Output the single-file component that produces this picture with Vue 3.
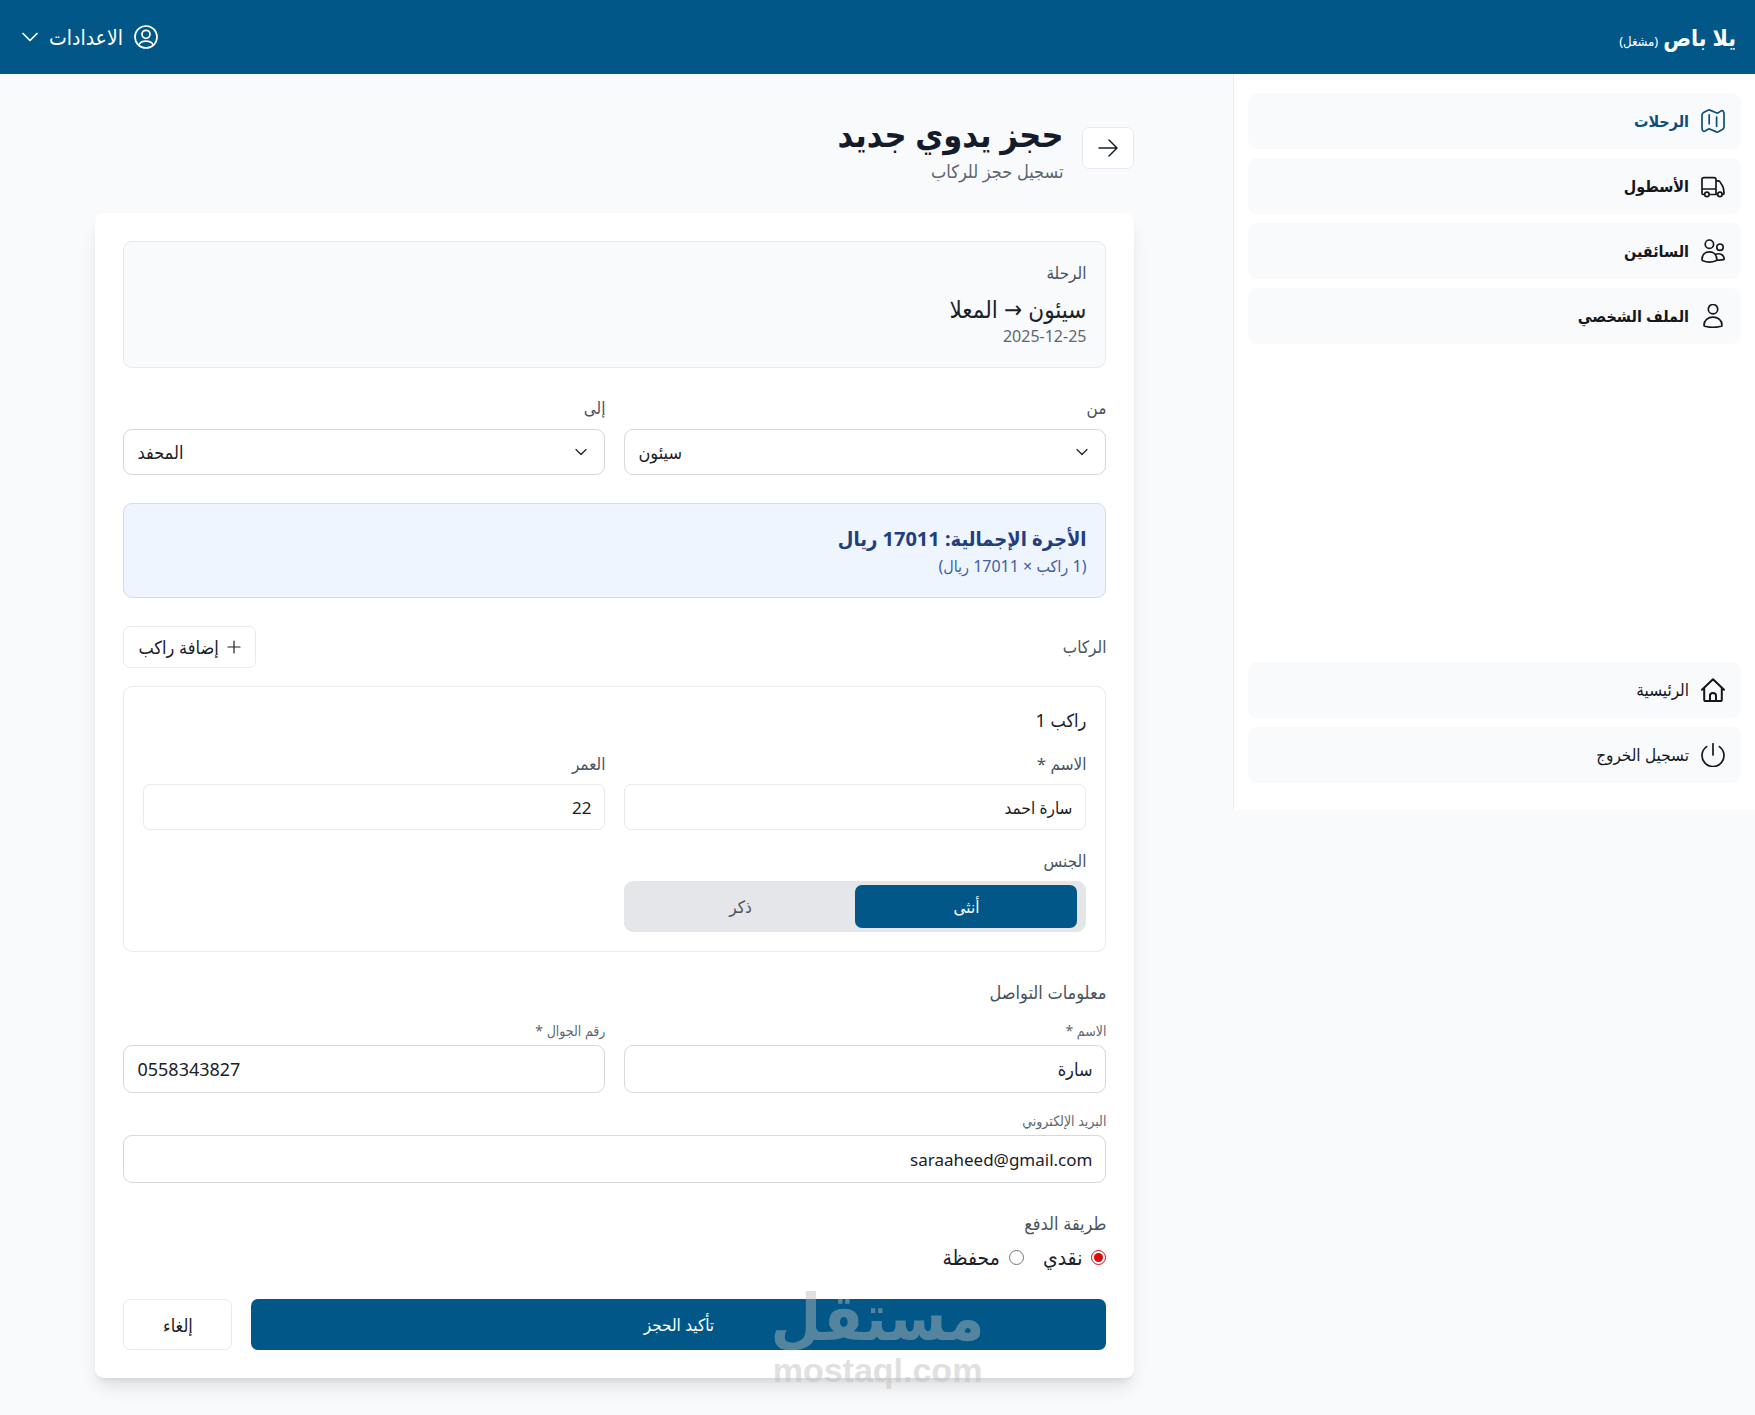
<script setup>
import { ref } from 'vue'

const from = ref('سيئون')
const to = ref('المحفد')
const passengerName = ref('سارة احمد')
const age = ref(22)
const gender = ref('female')
const contactName = ref('سارة')
const phone = ref('0558343827')
const email = ref('saraaheed@gmail.com')
const payment = ref('cash')

const mainLinks = [
  { label: 'الرحلات', icon: 'map', active: true },
  { label: 'الأسطول', icon: 'truck' },
  { label: 'السائقين', icon: 'users' },
  { label: 'الملف الشخصي', icon: 'user' },
]
const footLinks = [
  { label: 'الرئيسية', icon: 'home' },
  { label: 'تسجيل الخروج', icon: 'power' },
]

const icons = {
  map: 'M1 6V18.600C1 21.500 2 23 4.200 21.900L7 20.300Q8 19.700 9.100 20.200L15.400 22.900Q16.400 23.300 17.400 22.800L21.400 20.600Q23 19.700 23 17.800V5.400C23 2.500 22 1 19.800 2.100L17.200 3.700Q16.200 4.300 15.200 3.800L8.900 1.100Q7.900 .7 6.900 1.200L2.600 3.500Q1 4.400 1 6ZM8.200 5.800V14.800M15.600 8V17.200',
  truck: 'M3.600 20.500H2.600Q1 20.500 1 18.900V5.600Q1 3.600 3 3.600H13Q15 3.600 15 5.600V20.500H8.300M1 15H15M15 6.800H17Q18.300 6.800 19 7.900L21.200 11.400Q22.200 13 22.500 14.800L23 18.900Q23.200 20.500 21.500 20.500M16.600 20.500H15M3.700 20.400a2.200 2.200 0 1 0 4.400 0a2.200 2.200 0 1 0-4.400 0M16.700 20.400a2.200 2.200 0 1 0 4.400 0a2.200 2.200 0 1 0-4.400 0',
  users: 'M4.200 5.200a4.200 4.200 0 1 0 8.400 0a4.200 4.200 0 1 0-8.400 0M15.800 8.200a3.200 3.200 0 1 0 6.400 0a3.200 3.200 0 1 0-6.400 0M1 20.600C1 15.900 4 12.800 8.400 12.800S15.800 15.900 15.800 20.600Q15.800 21.500 15 21.800Q8.400 24.400 1.800 21.800Q1 21.500 1 20.600ZM14.600 15.600C18 13.600 22.800 15.400 23.200 19.600Q23.200 20.500 22.300 20.700Q19 21.500 15.800 20.900',
  user: 'M7.300 5.200a4.700 4.700 0 1 0 9.400 0a4.700 4.700 0 1 0-9.400 0M3 21.200C3 16.600 6.800 13.200 12 13.200S21 16.600 21 21.200Q21 22 20.200 22.300Q12 24.400 3.800 22.300Q3 22 3 21.200Z',
  home: 'M1 11.800L12 1.200L23 11.800M3.200 10V21.400Q3.200 23 4.800 23H19.200Q20.800 23 20.800 21.400V10M9 23V17.600Q9 15 12 15T15 17.600V23',
  power: 'M5.600 3.600A11 11 0 1 0 18.400 3.600M12 .8V12',
}
</script>

<template>
  <div class="page" dir="rtl" lang="ar">
    <header class="topbar">
      <div class="brand">
        <span class="brand-name">يلا باص</span>
        <small class="brand-role">(مشغل)</small>
      </div>
      <button type="button" class="settings">
        <svg class="ic" viewBox="0 0 24 24" aria-hidden="true">
          <circle cx="12" cy="12" r="11" />
          <circle cx="12" cy="9.300" r="4" />
          <path d="M4.800 20C6.200 17 8.800 16.200 12 16.200S17.800 17 19.200 20" />
        </svg>
        <span>الاعدادات</span>
        <svg class="ic caret" viewBox="0 0 16 16" aria-hidden="true"><path d="M1 4.500L8 11.500L15 4.500" /></svg>
      </button>
    </header>

    <div class="body">
      <aside class="sidebar">
        <nav class="links">
          <a
            v-for="link in mainLinks"
            :key="link.label"
            href="#"
            class="link strong"
            :class="{ active: link.active }"
          >
            <svg class="ic" viewBox="0 0 24 24" aria-hidden="true"><path :d="icons[link.icon]" /></svg>
            <span>{{ link.label }}</span>
          </a>
        </nav>
        <nav class="links">
          <a v-for="link in footLinks" :key="link.label" href="#" class="link">
            <svg class="ic" :class="link.icon" viewBox="0 0 24 24" aria-hidden="true"><path :d="icons[link.icon]" /></svg>
            <span>{{ link.label }}</span>
          </a>
        </nav>
      </aside>

      <main class="main">
        <div class="content">
          <div class="heading">
            <button type="button" class="btn back" aria-label="رجوع">
              <svg class="ic" viewBox="0 0 20 20" aria-hidden="true"><path d="M1 10H19M11 2L19 10L11 18" /></svg>
            </button>
            <div>
              <h1>حجز يدوي جديد</h1>
              <p class="subtitle">تسجيل حجز للركاب</p>
            </div>
          </div>

          <form class="card" @submit.prevent>
            <section class="trip">
              <p class="label">الرحلة</p>
              <p class="route">سيئون → المعلا</p>
              <p class="date">2025-12-25</p>
            </section>

            <div class="columns">
              <div class="field">
                <label class="label" for="from">من</label>
                <div class="select">
                  <select id="from" v-model="from" dir="ltr">
                    <option>سيئون</option>
                  </select>
                  <svg class="ic" viewBox="0 0 12 12" aria-hidden="true"><path d="M1 3.500L6 8.500L11 3.500" /></svg>
                </div>
              </div>
              <div class="field">
                <label class="label" for="to">إلى</label>
                <div class="select">
                  <select id="to" v-model="to" dir="ltr">
                    <option>المحفد</option>
                  </select>
                  <svg class="ic" viewBox="0 0 12 12" aria-hidden="true"><path d="M1 3.500L6 8.500L11 3.500" /></svg>
                </div>
              </div>
            </div>

            <section class="fare">
              <p class="fare-total">الأجرة الإجمالية: 17011 ريال</p>
              <p class="fare-detail">(1 راكب × 17011 ريال)</p>
            </section>

            <section class="passengers">
              <div class="row">
                <h2 class="label">الركاب</h2>
                <button type="button" class="btn add">
                  <svg class="ic" viewBox="0 0 14 14" aria-hidden="true"><path d="M7 1V13M1 7H13" /></svg>
                  <span>إضافة راكب</span>
                </button>
              </div>

              <div class="passenger">
                <h3>راكب 1</h3>
                <div class="columns">
                  <div class="field">
                    <label class="label" for="passenger-name">الاسم *</label>
                    <input id="passenger-name" v-model="passengerName" class="input compact" type="text" />
                  </div>
                  <div class="field">
                    <label class="label" for="passenger-age">العمر</label>
                    <input id="passenger-age" v-model="age" class="input compact" type="number" />
                  </div>
                  <div class="field">
                    <span id="gender-label" class="label">الجنس</span>
                    <div class="segment" role="group" aria-labelledby="gender-label">
                      <button type="button" :class="{ on: gender === 'female' }" @click="gender = 'female'">أنثى</button>
                      <button type="button" :class="{ on: gender === 'male' }" @click="gender = 'male'">ذكر</button>
                    </div>
                  </div>
                </div>
              </div>
            </section>

            <section class="contact">
              <h2 class="label section">معلومات التواصل</h2>
              <div class="columns">
                <div class="field tight">
                  <label class="label small" for="contact-name">الاسم *</label>
                  <input id="contact-name" v-model="contactName" class="input" type="text" />
                </div>
                <div class="field tight">
                  <label class="label small" for="contact-phone">رقم الجوال *</label>
                  <input id="contact-phone" v-model="phone" class="input" type="tel" dir="ltr" />
                </div>
                <div class="field tight wide">
                  <label class="label small" for="contact-email">البريد الإلكتروني</label>
                  <input id="contact-email" v-model="email" class="input" type="email" />
                </div>
              </div>
            </section>

            <fieldset class="payment">
              <legend class="label section">طريقة الدفع</legend>
              <div class="options">
                <label class="option">
                  <input v-model="payment" type="radio" name="payment" value="cash" />
                  <span>نقدي</span>
                </label>
                <label class="option">
                  <input v-model="payment" type="radio" name="payment" value="wallet" />
                  <span>محفظة</span>
                </label>
              </div>
            </fieldset>

            <div class="actions">
              <button type="submit" class="confirm">تأكيد الحجز</button>
              <button type="button" class="btn cancel">إلغاء</button>
            </div>
          </form>
        </div>
      </main>
    </div>

    <div class="watermark" aria-hidden="true">
      <span class="mark-ar">مستقل</span>
      <span class="mark-en">mostaql.com</span>
    </div>
  </div>
</template>

<style>
body {
  margin: 0;
  background: #f9fafc;
}
</style>

<style scoped>
.page,
.page * {
  box-sizing: border-box;
}
.page {
  --brand: #005788;
  --ink: #1b2129;
  --muted: #4b5360;
  --line: #e8eaed;
  --line-strong: #d5d8dc;
  position: relative;
  min-height: 100vh;
  background: #f9fafc;
  color: var(--ink);
  font-family: "Noto Sans", "DejaVu Sans Condensed", "DejaVu Sans", sans-serif;
  font-size: 17px;
  line-height: 24px;
}
.page button,
.page input,
.page select {
  margin: 0;
  font-family: inherit;
  color: inherit;
}
.page button {
  cursor: pointer;
}
h1,
h2,
h3,
p {
  margin: 0;
  font-weight: 400;
}
.ic {
  display: block;
  flex: none;
  width: 24px;
  height: 24px;
  fill: none;
  stroke: currentColor;
  stroke-width: 1.7;
  stroke-linecap: round;
  stroke-linejoin: round;
}

/* Top bar */
.topbar {
  display: flex;
  align-items: center;
  justify-content: space-between;
  height: 74px;
  padding: 0 19px 0 22px;
  background: var(--brand);
  color: #fff;
}
.brand {
  display: flex;
  align-items: baseline;
  gap: 5px;
}
.brand-name {
  font-size: 23px;
  font-weight: 700;
  line-height: 32px;
}
.brand-role {
  font-size: 13px;
}
.settings {
  display: flex;
  align-items: center;
  gap: 11px;
  padding: 0;
  border: 0;
  background: none;
  font-size: 21px;
  line-height: 28px;
}
.settings .caret {
  width: 16px;
  height: 16px;
}

/* Sidebar */
.body {
  display: flex;
  align-items: flex-start;
}
.sidebar {
  display: flex;
  flex: none;
  flex-direction: column;
  justify-content: space-between;
  width: 29.75%;
  min-height: 52vh;
  padding: 19px 14px 27px;
  border-inline-end: 1px solid #eceef1;
  background: #fff;
}
.links {
  display: flex;
  flex-direction: column;
  gap: 9px;
}
.link {
  display: flex;
  align-items: center;
  gap: 12px;
  height: 56px;
  padding: 0 16px;
  border-radius: 9px;
  background: #f9fafc;
  color: #14181d;
  text-decoration: none;
}
.link.strong {
  font-size: 16px;
  font-weight: 700;
}
.link.active {
  color: #0c4f78;
}
.ic.home {
  stroke-width: 2;
}

/* Main column */
.main {
  flex: 1;
  min-width: 0;
  padding: 37px 3px 37px 0;
}
.content {
  max-width: 1039px;
  margin: 0 auto;
}
.heading {
  display: flex;
  align-items: center;
  gap: 19px;
  margin-bottom: 28px;
}
.btn {
  display: flex;
  align-items: center;
  justify-content: center;
  border: 1px solid var(--line);
  border-radius: 7px;
  background: #fff;
}
.back {
  width: 52px;
  height: 42px;
  padding: 0;
}
.back .ic {
  width: 20px;
  height: 20px;
  stroke-width: 1.5;
}
h1 {
  font-size: 34px;
  font-weight: 700;
  line-height: 46px;
  color: #141b2b;
}
.subtitle {
  font-size: 18px;
  line-height: 28px;
  color: #5c6470;
}
.card {
  display: flex;
  flex-direction: column;
  gap: 28px;
  padding: 28px;
  border-radius: 9px;
  background: #fff;
  box-shadow: 0 12px 18px -3px rgba(0, 0, 0, 0.1), 0 5px 7px -4px rgba(0, 0, 0, 0.1);
}
.label {
  font-size: 17px;
  line-height: 24px;
  color: var(--muted);
}
.label.section {
  font-size: 18px;
}
.label.small {
  font-size: 14px;
  line-height: 22px;
  color: #5f6773;
}
.trip,
.fare,
.passenger {
  padding: 19px;
  border: 1px solid var(--line);
  border-radius: 9px;
}
.trip {
  background: #f9fafc;
}
.route {
  margin-top: 8px;
  font-size: 24px;
  line-height: 32px;
}
.date {
  font-size: 16px;
  line-height: 23px;
  color: #5f6773;
}
.columns {
  display: grid;
  grid-template-columns: repeat(2, minmax(0, 1fr));
  gap: 19px;
}
.field {
  display: flex;
  flex-direction: column;
  gap: 9px;
}
.field.tight {
  gap: 3px;
}
.wide {
  grid-column: 1 / -1;
}
.select {
  position: relative;
}
.select select {
  display: block;
  width: 100%;
  height: 46px;
  padding: 0 13px;
  border: 1px solid var(--line-strong);
  border-radius: 9px;
  background: #fff;
  font-size: 18px;
  text-align: left;
  appearance: none;
}
.select .ic {
  position: absolute;
  top: 17px;
  right: 18px;
  width: 12px;
  height: 12px;
  stroke-width: 1.2;
  pointer-events: none;
}
.fare {
  border-color: #cbdfee;
  background: #eef5ff;
}
.fare-total {
  font-size: 20px;
  font-weight: 700;
  line-height: 32px;
  color: #233e7d;
}
.fare-detail {
  font-size: 16px;
  line-height: 23px;
  color: #3f5ea6;
}
.passengers {
  display: flex;
  flex-direction: column;
  gap: 18px;
}
.row {
  display: flex;
  align-items: center;
  justify-content: space-between;
}
.add {
  gap: 8px;
  height: 42px;
  padding: 0 14px;
  font-size: 18px;
}
.add .ic {
  width: 14px;
  height: 14px;
  stroke-width: 1.2;
}
.passenger h3 {
  margin-bottom: 18px;
  font-size: 18px;
  line-height: 28px;
}
.input {
  width: 100%;
  height: 48px;
  padding: 0 13px;
  border: 1px solid var(--line-strong);
  border-radius: 9px;
  background: #fff;
  font-size: 18px;
}
.input.compact {
  height: 46px;
  border-color: var(--line);
  border-radius: 7px;
  font-size: 17px;
}
.input[type='number'] {
  appearance: textfield;
}
.input[type='email'] {
  font-size: 17px;
}
.passenger .field {
  gap: 8px;
}
.segment {
  display: flex;
  gap: 4px;
  height: 51px;
  padding: 4px 9px 4px 5px;
  border-radius: 9px;
  background: #e5e6ea;
}
.segment button {
  flex: 1;
  padding: 0;
  border: 0;
  border-radius: 7px;
  background: none;
  font-size: 17px;
  color: var(--muted);
}
.segment .on {
  background: var(--brand);
}
.contact {
  display: flex;
  flex-direction: column;
  gap: 16px;
}
.contact .columns {
  row-gap: 17px;
}
.payment {
  min-width: 0;
  margin: 0;
  padding: 0;
  border: 0;
}
.payment legend {
  padding: 0;
}
.options {
  display: flex;
  gap: 19px;
  margin-top: 8px;
}
.option {
  display: flex;
  align-items: center;
  gap: 9px;
  font-size: 21px;
  line-height: 28px;
}
.option input {
  width: 15px;
  height: 15px;
  accent-color: #dc0a0a;
}
.actions {
  display: flex;
  gap: 19px;
}
.actions button {
  height: 51px;
  border-radius: 7px;
  font-size: 17px;
}
.confirm {
  flex: 1;
  padding: 0;
  border: 0;
  background: var(--brand);
}
.page .confirm,
.page .segment .on {
  color: #fff;
}
.actions .cancel {
  width: 109px;
  padding: 0;
  font-size: 18px;
}

/* Site mark laid over the bottom of the page */
.watermark {
  position: absolute;
  bottom: 28px;
  left: 50%;
  display: flex;
  flex-direction: column;
  align-items: center;
  gap: 2px;
  transform: translateX(-50%);
  color: #bcbcbc;
  font-weight: 700;
  opacity: 0.45;
  pointer-events: none;
}
.mark-ar {
  font-size: 65px;
  line-height: 72px;
}
.mark-en {
  font-family: "Liberation Sans", sans-serif;
  font-size: 34px;
  line-height: 34px;
}
</style>
